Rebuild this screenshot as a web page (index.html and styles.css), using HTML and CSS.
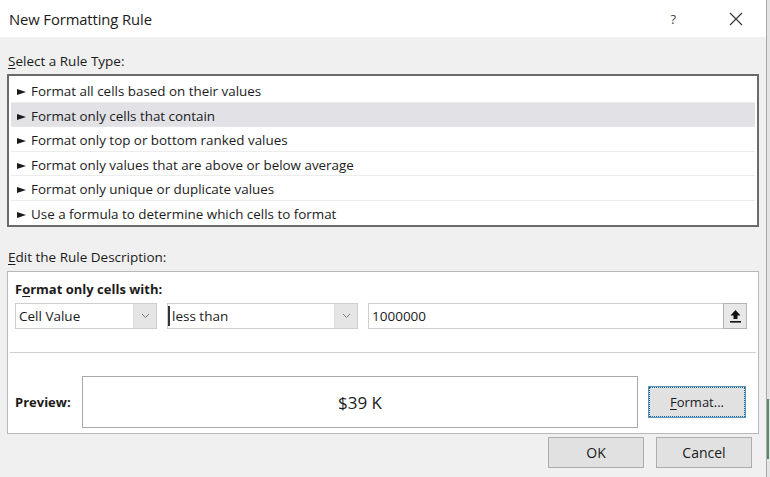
FILE: index.html
```html
<!DOCTYPE html>
<html>
<head>
<meta charset="utf-8">
<link rel="stylesheet" href="styles.css">
</head>
<body>
<div class="page">
  <div class="dialog">
    <div class="titlebar">
      <span class="title">New Formatting Rule</span>
      <span class="help">?</span>
      <svg class="close" width="14" height="14" viewBox="0 0 14 14"><path d="M1 1L13 13M13 1L1 13" stroke="#333" stroke-width="1.1" fill="none"/></svg>
    </div>
    <div class="content">
      <div class="label"><u>S</u>elect a Rule Type:</div>
      <div class="rules">
        <div class="rule"><svg class="arrow" width="9" height="6" viewBox="0 0 9 6"><path d="M0 0L9 3L0 6Z" fill="#1b1b1b"/></svg>Format all cells based on their values</div>
        <div class="rule selected"><svg class="arrow" width="9" height="6" viewBox="0 0 9 6"><path d="M0 0L9 3L0 6Z" fill="#1b1b1b"/></svg>Format only cells that contain</div>
        <div class="rule"><svg class="arrow" width="9" height="6" viewBox="0 0 9 6"><path d="M0 0L9 3L0 6Z" fill="#1b1b1b"/></svg>Format only top or bottom ranked values</div>
        <div class="rule"><svg class="arrow" width="9" height="6" viewBox="0 0 9 6"><path d="M0 0L9 3L0 6Z" fill="#1b1b1b"/></svg>Format only values that are above or below average</div>
        <div class="rule"><svg class="arrow" width="9" height="6" viewBox="0 0 9 6"><path d="M0 0L9 3L0 6Z" fill="#1b1b1b"/></svg>Format only unique or duplicate values</div>
        <div class="rule last"><svg class="arrow" width="9" height="6" viewBox="0 0 9 6"><path d="M0 0L9 3L0 6Z" fill="#1b1b1b"/></svg>Use a formula to determine which cells to format</div>
      </div>
      <div class="label label-edit"><u>E</u>dit the Rule Description:</div>
      <div class="desc">
        <div class="desc-title">F<u>o</u>rmat only cells with:</div>
        <div class="controls">
          <div class="combo combo-cell"><span class="combo-text">Cell Value</span><span class="combo-btn"><svg width="9" height="6" viewBox="0 0 9 6"><path d="M1 1L4.5 4.5L8 1" stroke="#777" fill="none"/></svg></span></div>
          <div class="combo combo-op"><span class="combo-text focus">less than</span><span class="combo-btn"><svg width="9" height="6" viewBox="0 0 9 6"><path d="M1 1L4.5 4.5L8 1" stroke="#777" fill="none"/></svg></span></div>
          <div class="input"><span class="input-text">1000000</span><span class="ref-btn"><svg width="13" height="14" viewBox="0 0 13 14"><path d="M6.5 1L1.5 6.5H4.5V10H8.5V6.5H11.5Z" fill="#111"/><rect x="1" y="12" width="11" height="1.6" fill="#111"/></svg></span></div>
        </div>
        <div class="sep"></div>
        <div class="preview-row">
          <span class="preview-label">Preview:</span>
          <div class="preview-box">$39 K</div>
          <div class="btn format-btn"><u>F</u>ormat...</div>
        </div>
      </div>
      <div class="buttons">
        <div class="btn">OK</div>
        <div class="btn">Cancel</div>
      </div>
    </div>
  </div>
  <div class="side"><div class="side-mark"></div></div>
</div>
</body>
</html>
```
FILE: styles.css
```css
* { box-sizing: border-box; }
html, body { margin: 0; padding: 0; }
body {
  width: 770px;
  height: 477px;
  overflow: hidden;
  font-family: "Open Sans", "Noto Sans", sans-serif;
  color: #1b1b1b;
  background: #e9e9e9;
}
u { text-decoration-thickness: 1px; text-underline-offset: 2px; }
.page { display: flex; width: 770px; height: 477px; }
.dialog {
  width: 767px;
  height: 477px;
  background: #f0f0f0;
  border-right: 1px solid #a9a9a9;
  display: flex;
  flex-direction: column;
}
.side {
  flex: 1;
  background: #e4e4e4;
  display: flex;
  flex-direction: column;
  justify-content: flex-end;
}
.side-mark { height: 60px; margin-bottom: 18px; background: #5b8a6a; width: 2px; }
.titlebar {
  height: 37px;
  background: #fff;
  display: flex;
  align-items: center;
  padding-left: 9px;
}
.title { font-size: 14.8px; flex: 1; letter-spacing: -0.1px; }
.help { font-size: 13px; color: #444; margin-right: 53px; }
.close { margin-right: 23px; }
.content { padding-left: 7px; padding-right: 8px; display: flex; flex-direction: column; }
.label { font-size: 13.5px; height: 17px; line-height: 17px; margin-top: 16px; padding-left: 1px; }
.label-edit { margin-top: 22px; }
.rules {
  margin-top: 4px;
  width: 752px;
  height: 153px;
  background: #fff;
  border: 2px solid #6a6a6a;
  padding: 2px 2px 0 2px;
}
.rule {
  height: 24.5px;
  font-size: 13.4px;
  line-height: 26px;
  padding-left: 6px;
  border-bottom: 1px solid #ececec;
  white-space: nowrap;
}
.rule.last { border-bottom: none; }
.rule.selected { background: #e1e1e6; border-bottom-color: #e6e6ea; }
.arrow { display: inline-block; margin-right: 5px; vertical-align: 1px; }
.desc {
  margin-top: 5px;
  width: 752px;
  height: 163px;
  background: #fff;
  border: 1px solid #b8b8b8;
  padding: 0 2px 0 7px;
  display: flex;
  flex-direction: column;
}
.desc-title { font-weight: bold; font-size: 13px; margin-top: 8px; height: 18px; line-height: 18px; }
.controls { display: flex; margin-top: 5px; height: 26px; }
.combo, .input {
  height: 26px;
  border: 1px solid #cfcfcf;
  display: flex;
  align-items: stretch;
  background: #fff;
}
.combo-cell { width: 142px; }
.combo-op { width: 191px; margin-left: 10px; }
.input { width: 379px; margin-left: 10px; }
.combo-text, .input-text { flex: 1; font-size: 13.5px; line-height: 24px; padding-left: 3px; }
.combo-text.focus { border-left: 2px solid #333; padding-left: 2px; margin: 2px 0; line-height: 20px; }
.combo-btn {
  width: 23px;
  background: #e5e5e5;
  border-left: 1px solid #dcdcdc;
  display: flex;
  align-items: center;
  justify-content: center;
}
.ref-btn {
  width: 24px;
  margin: -1px -1px -1px 0;
  background: #e8e8e8;
  border: 1px solid #b4b4b4;
  display: flex;
  align-items: center;
  justify-content: center;
}
.sep { height: 1px; background: #cfcfcf; margin-top: 23px; margin-left: -5px; }
.preview-row { display: flex; align-items: center; margin-top: 23px; }
.preview-label { font-weight: bold; font-size: 13px; width: 67px; }
.preview-box {
  width: 556px;
  height: 52px;
  border: 1px solid #a8a8a8;
  display: flex;
  align-items: center;
  justify-content: center;
  font-size: 17px;
}
.btn {
  width: 96px;
  height: 31px;
  background: #e1e1e1;
  border: 1px solid #adadad;
  display: flex;
  align-items: center;
  justify-content: center;
  font-size: 14px;
}
.format-btn {
  margin-left: 11px;
  width: 96px;
  height: 30px;
  border: 1px dotted #1f5f8b;
  box-shadow: 0 0 0 1px #5b95bd;
  font-size: 13px;
}
.buttons { display: flex; justify-content: flex-end; gap: 12px; margin-top: 3px; padding-right: 6px; }
```
